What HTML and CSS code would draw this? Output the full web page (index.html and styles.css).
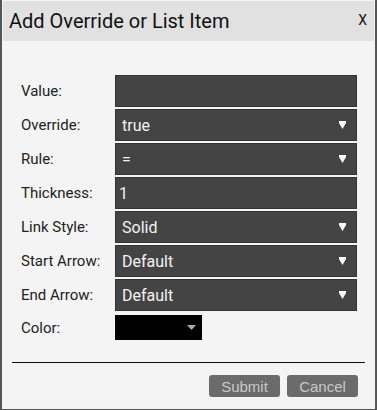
FILE: index.html
```html
<!DOCTYPE html>
<html lang="en">
<head>
    <meta charset="UTF-8">
    <meta name="viewport" content="width=device-width, initial-scale=1.0">
    <title>Add Override or List Item</title>
    <link rel="stylesheet" href="styles.css">
</head>
<body>
    <div class="dialog">
        <div class="dialog-header">
            <span class="dialog-title">Add Override or List Item</span>
            <span class="dialog-close">X</span>
        </div>

        <form class="dialog-body">
            <label for="value">Value:</label>
            <input type="text" id="value">

            <label for="override">Override:</label>
            <div class="select-wrap">
                <select id="override">
                    <option>true</option>
                    <option>false</option>
                </select>
                <svg class="arrow" width="7" height="8" viewBox="0 0 7 8"><polygon points="0,0 7,0 7,2 3.5,8 0,2" fill="#fff"/></svg>
            </div>

            <label for="rule">Rule:</label>
            <div class="select-wrap">
                <select id="rule">
                    <option>=</option>
                </select>
                <svg class="arrow" width="7" height="8" viewBox="0 0 7 8"><polygon points="0,0 7,0 7,2 3.5,8 0,2" fill="#fff"/></svg>
            </div>

            <label for="thickness">Thickness:</label>
            <input type="text" id="thickness" value="1">

            <label for="linkStyle">Link Style:</label>
            <div class="select-wrap">
                <select id="linkStyle">
                    <option>Solid</option>
                    <option>Dashed</option>
                </select>
                <svg class="arrow" width="7" height="8" viewBox="0 0 7 8"><polygon points="0,0 7,0 7,2 3.5,8 0,2" fill="#fff"/></svg>
            </div>

            <label for="startArrow">Start Arrow:</label>
            <div class="select-wrap">
                <select id="startArrow">
                    <option>Default</option>
                </select>
                <svg class="arrow" width="7" height="8" viewBox="0 0 7 8"><polygon points="0,0 7,0 7,2 3.5,8 0,2" fill="#fff"/></svg>
            </div>

            <label for="endArrow">End Arrow:</label>
            <div class="select-wrap">
                <select id="endArrow">
                    <option>Default</option>
                </select>
                <svg class="arrow" width="7" height="8" viewBox="0 0 7 8"><polygon points="0,0 7,0 7,2 3.5,8 0,2" fill="#fff"/></svg>
            </div>

            <label class="color-label">Color:</label>
            <div class="color-pick">
                <svg width="9" height="5" viewBox="0 0 9 5"><polygon points="0,0 9,0 4.5,5" fill="#aaa"/></svg>
            </div>
        </form>

        <div class="dialog-footer">
            <button type="button">Submit</button>
            <button type="button">Cancel</button>
        </div>
    </div>
</body>
</html>
```

FILE: styles.css
```css
body {
    margin: 0;
    font-family: Roboto, "Noto Sans", sans-serif;
}
.dialog {
    width: 373px;
    height: 409px;
    background-color: #f4f4f4;
    border-left: 2px solid #555;
    border-right: 2px solid #555;
    border-bottom: 1px solid #555;
    display: flex;
    flex-direction: column;
}
.dialog-header {
    margin: 1px 1px 0 1px;
    height: 40px;
    background-color: #e1e1e1;
    display: flex;
    align-items: center;
    justify-content: space-between;
    padding: 0 7px 0 6px;
}
.dialog-title {
    font-size: 20px;
    color: #111;
}
.dialog-close {
    font-size: 14px;
    color: #111;
    margin-top: -2px;
}
.dialog-body {
    margin: 34px 0 0 19px;
    display: grid;
    grid-template-columns: 94px 242px;
    grid-auto-rows: 32px;
    row-gap: 2px;
    align-items: center;
}
label {
    font-size: 15px;
    color: #222;
}
input, select {
    width: 100%;
    height: 32px;
    box-sizing: border-box;
    background-color: #444;
    border: 1px solid #333;
    color: #f2f2f2;
    font-family: Roboto, "Noto Sans", sans-serif;
    font-size: 16px;
    margin: 0;
    outline: none;
}
input {
    padding: 0 3px;
}
select {
    appearance: none;
    -webkit-appearance: none;
    border-radius: 0;
    padding: 0 6px;
}
.select-wrap {
    position: relative;
    height: 32px;
}
.select-wrap .arrow {
    position: absolute;
    right: 11px;
    top: 12px;
    pointer-events: none;
}
.color-pick {
    width: 87px;
    height: 25px;
    background-color: #000;
    display: flex;
    align-items: center;
    justify-content: flex-end;
    padding-right: 6px;
    box-sizing: border-box;
    align-self: start;
    margin-top: 2px;
}
.color-label {
    align-self: start;
    margin-top: 6px;
}
.dialog-footer {
    margin: 17px 10px 0 10px;
    border-top: 1px solid #111;
    padding: 12px 7px 0 0;
    display: flex;
    justify-content: flex-end;
    gap: 7px;
}
button {
    width: 71px;
    height: 22px;
    background-color: #6b6b6b;
    color: #c8c8c8;
    border: none;
    border-radius: 3px;
    font-family: "Liberation Sans", Arial, sans-serif;
    font-size: 15px;
    padding: 0;
}
```
